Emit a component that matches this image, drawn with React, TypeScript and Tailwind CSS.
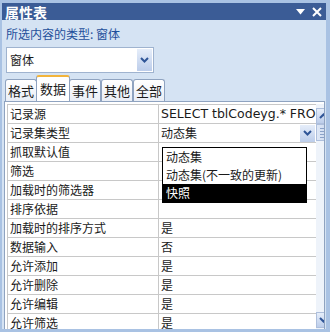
import React from "react";

const rows: [string, string][] = [
  ["记录源", "SELECT tblCodeyg.* FRO"],
  ["记录集类型", "动态集"],
  ["抓取默认值", ""],
  ["筛选", ""],
  ["加载时的筛选器", ""],
  ["排序依据", ""],
  ["加载时的排序方式", "是"],
  ["数据输入", "否"],
  ["允许添加", "是"],
  ["允许删除", "是"],
  ["允许编辑", "是"],
  ["允许筛选", "是"],
];

const font = { fontFamily: '"Noto Sans CJK SC", "Liberation Sans", sans-serif' };

function Chevron({ up = false }: { up?: boolean }) {
  return (
    <svg width="9" height="6" viewBox="0 0 9 6">
      <path
        d={up ? "M1 5 L4.5 1.5 L8 5" : "M1 1 L4.5 4.5 L8 1"}
        fill="none"
        stroke="#2f5597"
        strokeWidth="2"
      />
    </svg>
  );
}

function Btn({ up = false, className = "" }: { up?: boolean; className?: string }) {
  return (
    <div
      className={
        "flex items-center justify-center bg-gradient-to-b from-[#e6eefa] to-[#bccdea] border border-[#aebfdc] " +
        className
      }
    >
      <Chevron up={up} />
    </div>
  );
}

export default function App() {
  return (
    <div
      className="w-[330px] h-[332px] overflow-hidden bg-[#d5e3f3] border-t-[3px] border-l-[2px] border-r-[4px] border-b-[3px] border-[#a9c2e3] flex flex-col text-[12px] text-[#1a1a1a]"
      style={font}
    >
      <div className="h-[17px] bg-[#3b5c96] flex items-center justify-between pl-[3px] pr-[4px] shrink-0">
        <span className="text-white font-bold text-[14px] leading-none">属性表</span>
        <div className="flex items-center gap-[7px]">
          <svg width="9" height="6" viewBox="0 0 9 6">
            <path d="M0 0 L9 0 L4.5 5.5 Z" fill="#ffffff" />
          </svg>
          <svg width="10" height="10" viewBox="0 0 10 10">
            <path d="M1 1 L9 9 M9 1 L1 9" stroke="#ffffff" strokeWidth="2" />
          </svg>
        </div>
      </div>
      <div className="pl-[4px] pt-[7px] h-[21px] leading-[14px] text-[#1f4f9b] shrink-0">所选内容的类型: 窗体</div>
      <div className="ml-[4px] mt-[6px] w-[148px] h-[26px] bg-white border border-[#9fb3cf] flex items-center justify-between pl-[3px] pr-[1px] shrink-0">
        <span>窗体</span>
        <Btn className="w-[15px] h-[22px] border-0" />
      </div>
      <div className="flex items-end h-[28px] ml-[3px] shrink-0">
        {["格式", "数据", "事件", "其他", "全部"].map((t, i) =>
          i === 1 ? (
            <div
              key={t}
              className="h-[26px] px-[3px] bg-white border border-b-0 border-[#8fa3c0] border-t-[2px] border-t-[#f2b43c] rounded-t-[3px] flex items-center -mx-[1px] relative z-10 text-[13px]"
            >
              {t}
            </div>
          ) : (
            <div
              key={t}
              className="h-[22px] px-[2px] bg-gradient-to-b from-[#ffffff] to-[#e9eef6] border border-b-0 border-[#8fa3c0] rounded-t-[3px] flex items-center text-[13px]"
            >
              {t}
            </div>
          )
        )}
      </div>
      <div className="ml-[2px] mr-[1px] flex-1 min-h-0 bg-white border border-b-0 border-[#8fa3c0] pt-[2px] pl-[2px] flex relative overflow-hidden">
        <div className="flex-1 flex flex-col border-l border-t border-[#c8c8c8]">
          {rows.map(([k, v], i) => (
            <div key={k} className="h-[19px] flex border-b border-[#c8c8c8] shrink-0">
              <div className="w-[151px] pl-[2px] border-r border-[#c8c8c8] leading-[18px] whitespace-nowrap overflow-hidden">{k}</div>
              <div className="flex-1 pl-[2px] leading-[18px] whitespace-nowrap overflow-hidden flex justify-between items-center">
                <span style={i === 0 ? { fontFamily: '"DejaVu Sans", sans-serif', fontSize: "12.5px" } : undefined}>{v}</span>
                {i === 1 && <Btn className="w-[15px] h-[17px] border-0 mr-[1px]" />}
              </div>
            </div>
          ))}
        </div>
        <div className="w-[18px] flex flex-col bg-[#eef3fa] pt-[4px] pb-[1px] items-center">
          <Btn up className="w-[16px] h-[16px]" />
          <div className="w-[16px] h-[17px] bg-gradient-to-r from-[#dfe8f6] to-[#c6d5ee] border border-[#aebfdc] flex flex-col items-center justify-center gap-[2px]">
            <div className="w-[7px] h-px bg-[#8aa2c8]" />
            <div className="w-[7px] h-px bg-[#8aa2c8]" />
            <div className="w-[7px] h-px bg-[#8aa2c8]" />
            <div className="w-[7px] h-px bg-[#8aa2c8]" />
          </div>
          <div className="flex-1" />
          <Btn className="w-[16px] h-[16px]" />
        </div>
        <div className="absolute left-[157px] top-[45px] w-[145px] bg-white border border-black flex flex-col">
          <div className="h-[18px] leading-[18px] pl-[3px]">动态集</div>
          <div className="h-[18px] leading-[18px] pl-[3px]">动态集(不一致的更新)</div>
          <div className="h-[18px] leading-[18px] pl-[3px] bg-black text-white">快照</div>
        </div>
      </div>
    </div>
  );
}
